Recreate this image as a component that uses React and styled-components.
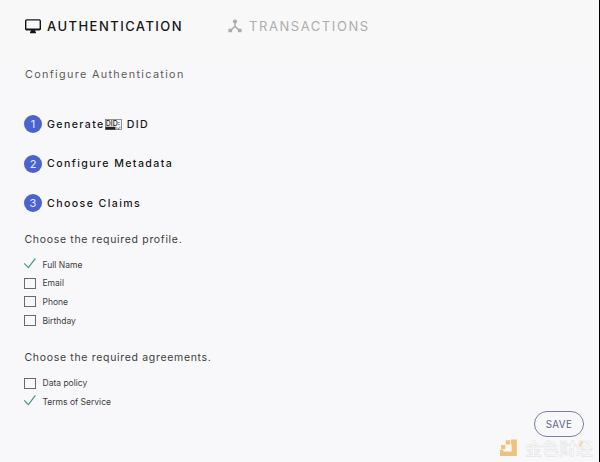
import React from "react";
import styled, { createGlobalStyle } from "styled-components";

const profile = [
  { label: "Full Name", checked: true },
  { label: "Email" },
  { label: "Phone" },
  { label: "Birthday" },
];

const agreements = [
  { label: "Data policy" },
  { label: "Terms of Service", checked: true },
];

function MonitorIcon() {
  return (
    <svg width="16" height="15" viewBox="0 0 16 15">
      <rect x="0.7" y="0.9" width="14.6" height="9.9" rx="1" fill="none" stroke="#161616" strokeWidth="1.4" />
      <path d="M0.8 9.4h14.4v1.6H0.8z M6.2 11h3.6l1.2 2.4v0.8H5v-0.8z" fill="#161616" />
    </svg>
  );
}

function NodesIcon() {
  return (
    <svg width="14" height="14" viewBox="0 0 14 14">
      <path d="M7 3v4.2L2.4 11.6M7 7.2l4.6 4.4" fill="none" stroke="#acacac" strokeWidth="1.5" />
      <circle cx="7" cy="2.6" r="2.1" fill="#acacac" />
      <path d="M0.4 9.8h3.7v3.4H0.4zM9.9 9.8h3.7v3.4H9.9z" fill="#acacac" />
    </svg>
  );
}

function DidIcon() {
  return (
    <svg width="17" height="11" viewBox="0 0 17 11">
      <rect x="0.5" y="0.5" width="16" height="10" fill="#f4f4f4" stroke="#777" strokeWidth="0.8" />
      <path d="M0.5 7.8h10v2.8h-10z" fill="#222" />
      <path d="M11.2 8.4h1.3v1h-1.3zM13 9.2h1.3v1H13zM14.4 7.8h1v1h-1z" fill="#555" />
      <text x="0.8" y="6.8" fontSize="7" fontWeight="500" fill="#222" letterSpacing="0">DID:</text>
    </svg>
  );
}

function CheckIcon() {
  return (
    <svg width="14" height="12" viewBox="0 0 14 12">
      <path d="M0.2 5.4l4.2 4.2L11.4 0.4" fill="none" stroke="#4a9a83" strokeWidth="1.3" />
    </svg>
  );
}

function CoinLogo() {
  return (
    <svg width="17" height="17" viewBox="0 0 17 17">
      <path d="M11 0.5h5.8V17H0v-6.2h3.4v1.8h8.2V5.6H11z" fill="#efc27c" />
      <path d="M1 6h4.4v4.2H1zM5.8 1.2h4.4v4.2H5.8z" fill="#efc27c" />
    </svg>
  );
}

function Option({ label, checked }) {
  return (
    <OptionRow>
      <Mark $checked={checked}>{checked ? <CheckIcon /> : <Box />}</Mark>
      <span>{label}</span>
    </OptionRow>
  );
}

export default function App() {
  return (
    <Page>
      <GlobalStyle />
      <Tabs>
        <Tab $active>
          <MonitorIcon />
          <span>AUTHENTICATION</span>
        </Tab>
        <Tab>
          <NodesIcon />
          <span>TRANSACTIONS</span>
        </Tab>
      </Tabs>
      <Heading>Configure Authentication</Heading>
      <Steps>
        <Step>
          <Badge>1</Badge>
          <span>Generate</span>
          <DidIcon />
          <DidText>DID</DidText>
        </Step>
        <Step>
          <Badge>2</Badge>
          <span>Configure Metadata</span>
        </Step>
        <Step>
          <Badge>3</Badge>
          <span>Choose Claims</span>
        </Step>
      </Steps>
      <Prompt>Choose the required profile.</Prompt>
      <Options>
        {profile.map((item) => (
          <Option key={item.label} {...item} />
        ))}
      </Options>
      <Prompt>Choose the required agreements.</Prompt>
      <Options>
        {agreements.map((item) => (
          <Option key={item.label} {...item} />
        ))}
      </Options>
      <SaveButton>SAVE</SaveButton>
      <Watermark>
        <CoinLogo />
        <WatermarkText>金色财经</WatermarkText>
        <Accent />
      </Watermark>
    </Page>
  );
}

const GlobalStyle = createGlobalStyle`
  * {
    box-sizing: border-box;
  }
  body {
    margin: 0;
    overflow: hidden;
  }
  svg {
    display: block;
    flex: none;
  }
`;

const Page = styled.div`
  position: relative;
  width: 600px;
  height: 462px;
  padding: 16px 0 0 24px;
  background: linear-gradient(#f8f8f8, #f8f8fb 30%, #f8f8fb);
  border-right: 1px solid #000;
  font-family: Inter, sans-serif;
  white-space: nowrap;
`;

const Tabs = styled.div`
  display: flex;
  height: 20px;
`;

const Tab = styled.div`
  display: flex;
  align-items: center;
  gap: ${(props) => (props.$active ? "6px" : "7px")};
  width: ${(props) => (props.$active ? "204px" : "auto")};
  padding-left: ${(props) => (props.$active ? "1px" : "0")};
  color: ${(props) => (props.$active ? "#161616" : "#adadad")};
  font-size: 13px;
  font-weight: ${(props) => (props.$active ? 500 : 400)};
  letter-spacing: ${(props) => (props.$active ? "1.46px" : "1.57px")};
`;

const Heading = styled.div`
  height: 20px;
  margin-top: 28px;
  padding-left: 1px;
  color: #5c5c5c;
  font-size: 10.8px;
  line-height: 21px;
  letter-spacing: 1.34px;
`;

const Steps = styled.div`
  margin-top: 20px;
`;

const Step = styled.div`
  display: flex;
  align-items: center;
  height: 39.5px;
  padding-top: 1px;
  color: #181818;
  font-size: 10.6px;
  font-weight: 550;
  letter-spacing: 1.4px;
`;

const Badge = styled.span`
  display: flex;
  align-items: center;
  justify-content: center;
  width: 18px;
  height: 18px;
  margin-right: 5px;
  border-radius: 50%;
  background: #4b63cf;
  color: #e6ebff;
  font-size: 11px;
  font-weight: 400;
  letter-spacing: 0;
`;

const DidText = styled.span`
  margin-left: 5px;
`;

const Prompt = styled.div`
  height: 20px;
  margin-top: 7px;
  padding-left: 0.5px;
  color: #3c3c3c;
  font-size: 10.5px;
  line-height: 20px;
  letter-spacing: 0.68px;
`;

const Options = styled.div`
  margin: 6px 0 18px;
`;

const OptionRow = styled.div`
  display: flex;
  align-items: center;
  height: 18.6px;
  color: #3c3c3c;
  font-size: 8.5px;
`;

const Mark = styled.span`
  display: flex;
  width: 18.5px;
  padding-bottom: ${(props) => (props.$checked ? "2px" : "0")};
`;

const Box = styled.span`
  width: 12px;
  height: 11px;
  border: 1px solid #6a6a6a;
`;

const SaveButton = styled.button`
  position: absolute;
  left: 534px;
  top: 411px;
  width: 50px;
  height: 26px;
  padding: 1px 0 0;
  border: 1px solid #7680a0;
  border-radius: 13px;
  background: transparent;
  color: #5d6684;
  font-family: inherit;
  font-size: 9.8px;
  letter-spacing: 0.4px;
`;

const Watermark = styled.div`
  position: absolute;
  left: 500px;
  top: 439px;
  display: flex;
  align-items: center;
  gap: 8px;
`;

const WatermarkText = styled.span`
  color: #fcfcfd;
  font-family: "Noto Sans CJK SC", sans-serif;
  font-size: 17px;
  font-weight: 500;
  line-height: 17px;
  -webkit-text-stroke: 0.4px #dcdde0;
`;

const Accent = styled.span`
  position: absolute;
  left: 80px;
  top: 2px;
  width: 2px;
  height: 6px;
  background: #f0d6a0;
  transform: rotate(28deg);
`;
